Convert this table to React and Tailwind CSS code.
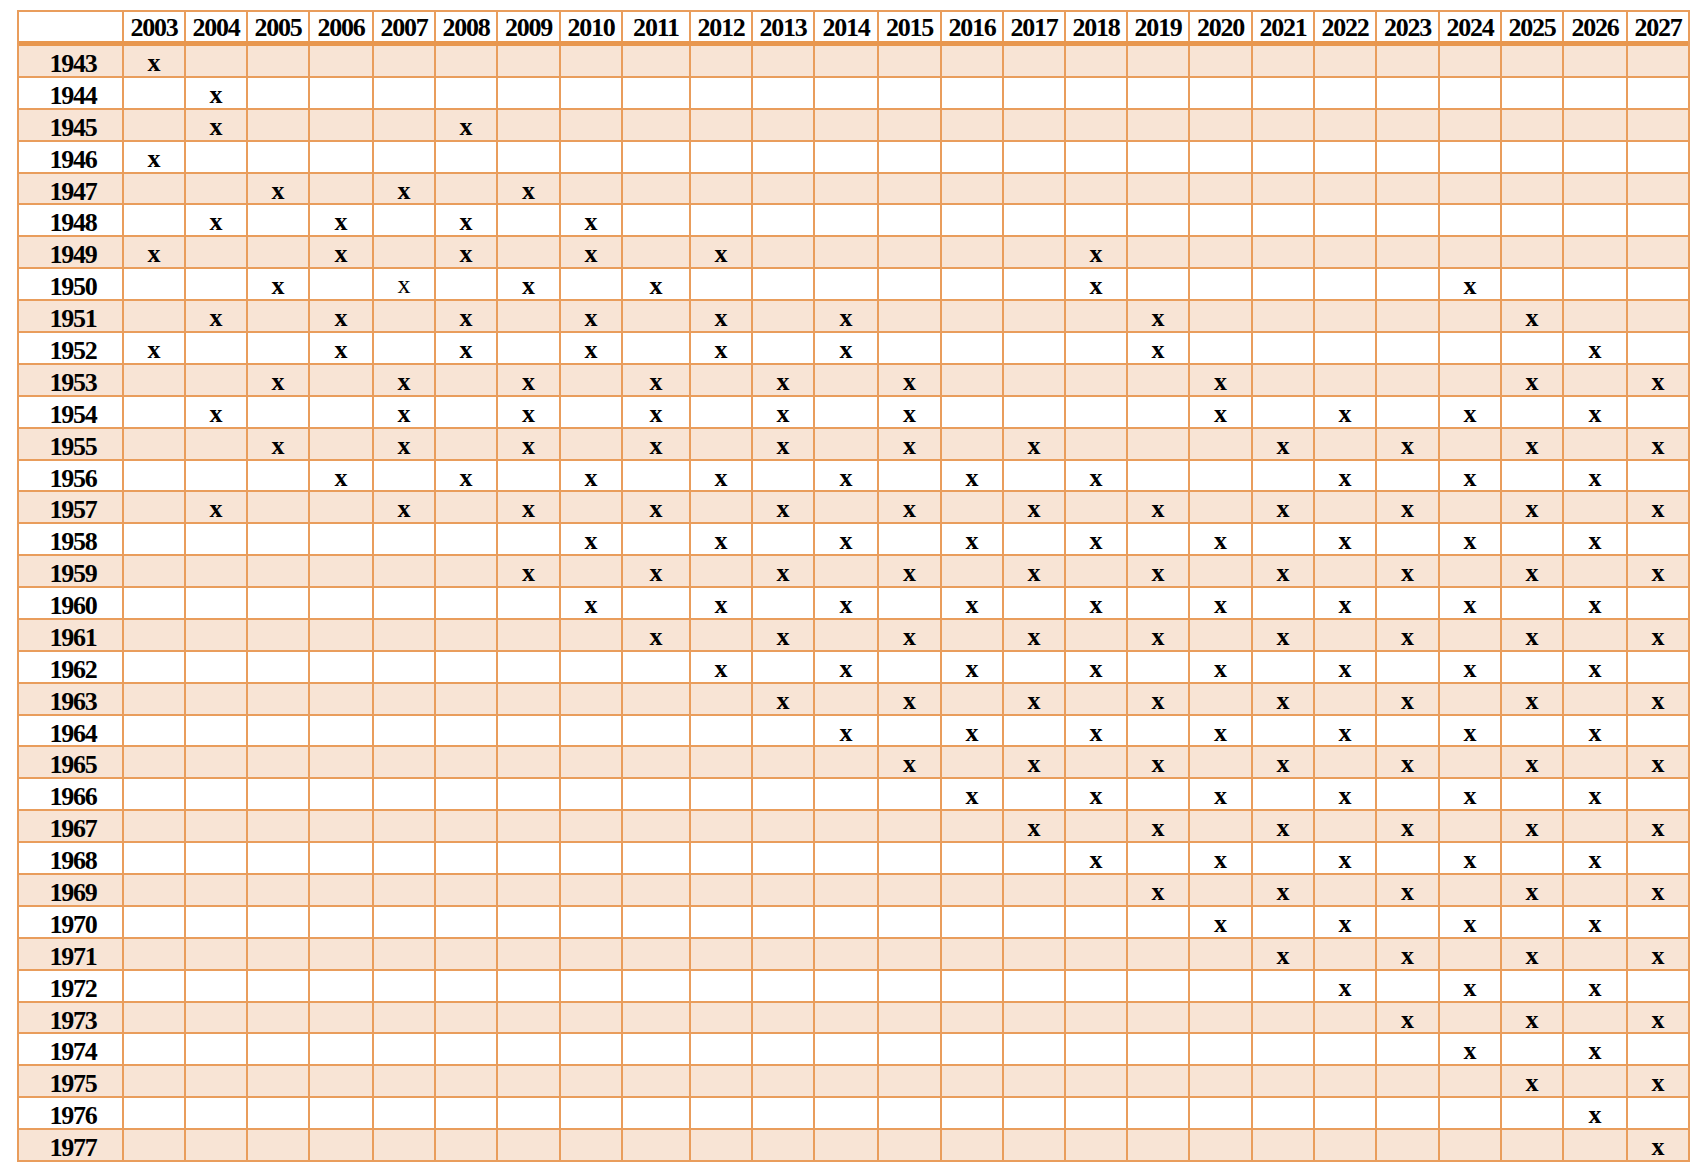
const YEARS = Array.from({ length: 25 }, (_, i) => 2003 + i);
const ROWS = Array.from({ length: 35 }, (_, i) => 1943 + i);

// column template, written out so tailwind picks it up
const COLS =
  'grid-cols-[103px_60px_60px_60px_62px_60px_60px_61px_60px_66px_60px_60px_62px_61px_60px_60px_60px_60px_61px_60px_60px_61px_60px_60px_62px_60px]';

const range = (from, to) => {
  const out = [];
  for (let y = from; y <= to; y += 2) out.push(y);
  return out;
};

const MARKS = {
  1943: [2003],
  1944: [2004],
  1945: [2004, 2008],
  1946: [2003],
  1947: [2005, 2007, 2009],
  1948: [2004, 2006, 2008, 2010],
  1949: [2003, 2006, 2008, 2010, 2012, 2018],
  1950: [2005, 2007, 2009, 2011, 2018, 2024],
  1951: [2004, 2006, 2008, 2010, 2012, 2014, 2019, 2025],
  1952: [2003, 2006, 2008, 2010, 2012, 2014, 2019, 2026],
  1953: [2005, 2007, 2009, 2011, 2013, 2015, 2020, 2025, 2027],
  1954: [2004, 2007, 2009, 2011, 2013, 2015, 2020, 2022, 2024, 2026],
  1955: [2005, 2007, 2009, 2011, 2013, 2015, 2017, 2021, 2023, 2025, 2027],
  1956: [2006, 2008, 2010, 2012, 2014, 2016, 2018, 2022, 2024, 2026],
  1957: [2004, 2007, 2009, 2011, 2013, 2015, 2017, 2019, 2021, 2023, 2025, 2027],
  1958: range(2010, 2026),
};
for (let y = 1959; y <= 1977; y++) MARKS[y] = range(y + 50, 2027);

const Cell = ({ shaded, children, className = '' }) => (
  <div
    className={`${shaded ? 'bg-[#F8E4D5]' : 'bg-white'} text-center leading-[26px] ${className}`}
  >
    {children}
  </div>
);

export default function App() {
  return (
    <div className="min-h-screen bg-white pt-[10px] pl-[17px]">
      <div className="flex w-fit flex-col bg-[#E99D5C] p-[2px] font-['Liberation_Serif',serif] text-[26px] font-bold text-black">
        {/* Header */}
        <div className={`grid h-[29px] gap-[2px] ${COLS}`}>
          <div className="bg-white" />
          {YEARS.map((y) => (
            <div key={y} className="bg-white pt-[3px] text-center leading-[26px] tracking-[-1.2px]">
              {y}
            </div>
          ))}
        </div>

        {/* Thick rule under header */}
        <div className="h-[5px] bg-[#E8974F]" />

        {/* Body */}
        <div className={`grid h-[1114px] grid-rows-[repeat(35,minmax(0,1fr))] gap-[2px] ${COLS}`}>
          {ROWS.map((r, ri) => {
            const shaded = ri % 2 === 0;
            const marks = MARKS[r] || [];
            return [
              <Cell key={`${r}-l`} shaded={shaded} className="pl-[5px] pt-[5px] tracking-[-1.2px]">
                {r}
              </Cell>,
              ...YEARS.map((y) => {
                const on = marks.includes(y);
                // one mark in the source is set in regular weight
                const thin = r === 1950 && y === 2007;
                return (
                  <Cell
                    key={`${r}-${y}`}
                    shaded={shaded}
                    className={thin ? 'pt-[3px] font-normal' : 'pt-[4px]'}
                  >
                    {on ? 'x' : ''}
                  </Cell>
                );
              }),
            ];
          })}
        </div>
      </div>
    </div>
  );
}
